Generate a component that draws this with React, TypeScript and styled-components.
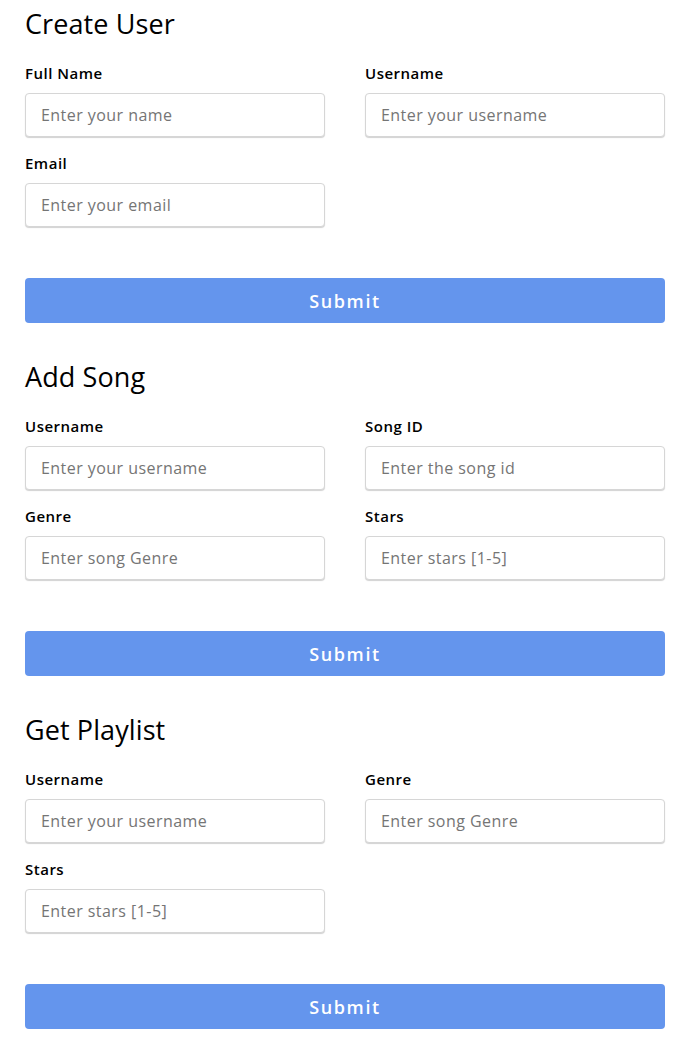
import React from "react";
import styled, { createGlobalStyle } from "styled-components";

const Global = createGlobalStyle`
  html, body { margin: 0; padding: 0; background: #ffffff; }
  body { font-family: "Open Sans", "Noto Sans", sans-serif; color: #000; }
  * { box-sizing: border-box; }
`;

const Page = styled.div`
  width: 682px;
  padding: 6px 17px 20px 25px;
  display: flex;
  flex-direction: column;
`;

const Section = styled.form`
  display: flex;
  flex-direction: column;
  & + & { margin-top: 36px; }
`;

const Title = styled.h2`
  margin: 0 0 21px 0;
  font-size: 27px;
  line-height: 36px;
  font-weight: 500;
  letter-spacing: 0.1px;
  color: #000;
`;

const Grid = styled.div`
  display: grid;
  grid-template-columns: 300px 300px;
  column-gap: 40px;
  row-gap: 16px;
`;

const Field = styled.div`
  display: flex;
  flex-direction: column;
`;

const Label = styled.label`
  font-size: 15px;
  line-height: 20px;
  font-weight: 600;
  letter-spacing: 0.5px;
  margin-bottom: 10px;
  color: #000;
`;

const Input = styled.input`
  height: 44px;
  width: 300px;
  padding: 0 15px;
  border: 1px solid #d6d6d6;
  border-radius: 4px;
  box-shadow: 0 1px 1px rgba(0, 0, 0, 0.18);
  font-family: inherit;
  font-size: 16px;
  letter-spacing: 0.45px;
  color: #333;
  background: #fff;
  outline: none;
  &::placeholder { color: #757575; }
`;

const Button = styled.button`
  margin-top: 51px;
  height: 45px;
  width: 640px;
  border: none;
  border-radius: 4px;
  background: #6495ed;
  color: #fff;
  font-family: inherit;
  font-size: 18px;
  font-weight: 600;
  letter-spacing: 1.6px;
  cursor: pointer;
`;

type F = { label: string; placeholder: string };

const sections: { title: string; fields: F[] }[] = [
  {
    title: "Create User",
    fields: [
      { label: "Full Name", placeholder: "Enter your name" },
      { label: "Username", placeholder: "Enter your username" },
      { label: "Email", placeholder: "Enter your email" },
    ],
  },
  {
    title: "Add Song",
    fields: [
      { label: "Username", placeholder: "Enter your username" },
      { label: "Song ID", placeholder: "Enter the song id" },
      { label: "Genre", placeholder: "Enter song Genre" },
      { label: "Stars", placeholder: "Enter stars [1-5]" },
    ],
  },
  {
    title: "Get Playlist",
    fields: [
      { label: "Username", placeholder: "Enter your username" },
      { label: "Genre", placeholder: "Enter song Genre" },
      { label: "Stars", placeholder: "Enter stars [1-5]" },
    ],
  },
];

export default function App() {
  return (
    <>
      <Global />
      <Page>
        {sections.map((s) => (
          <Section key={s.title} onSubmit={(e) => e.preventDefault()}>
            <Title>{s.title}</Title>
            <Grid>
              {s.fields.map((f, i) => (
                <Field key={i}>
                  <Label>{f.label}</Label>
                  <Input placeholder={f.placeholder} />
                </Field>
              ))}
            </Grid>
            <Button type="submit">Submit</Button>
          </Section>
        ))}
      </Page>
    </>
  );
}
